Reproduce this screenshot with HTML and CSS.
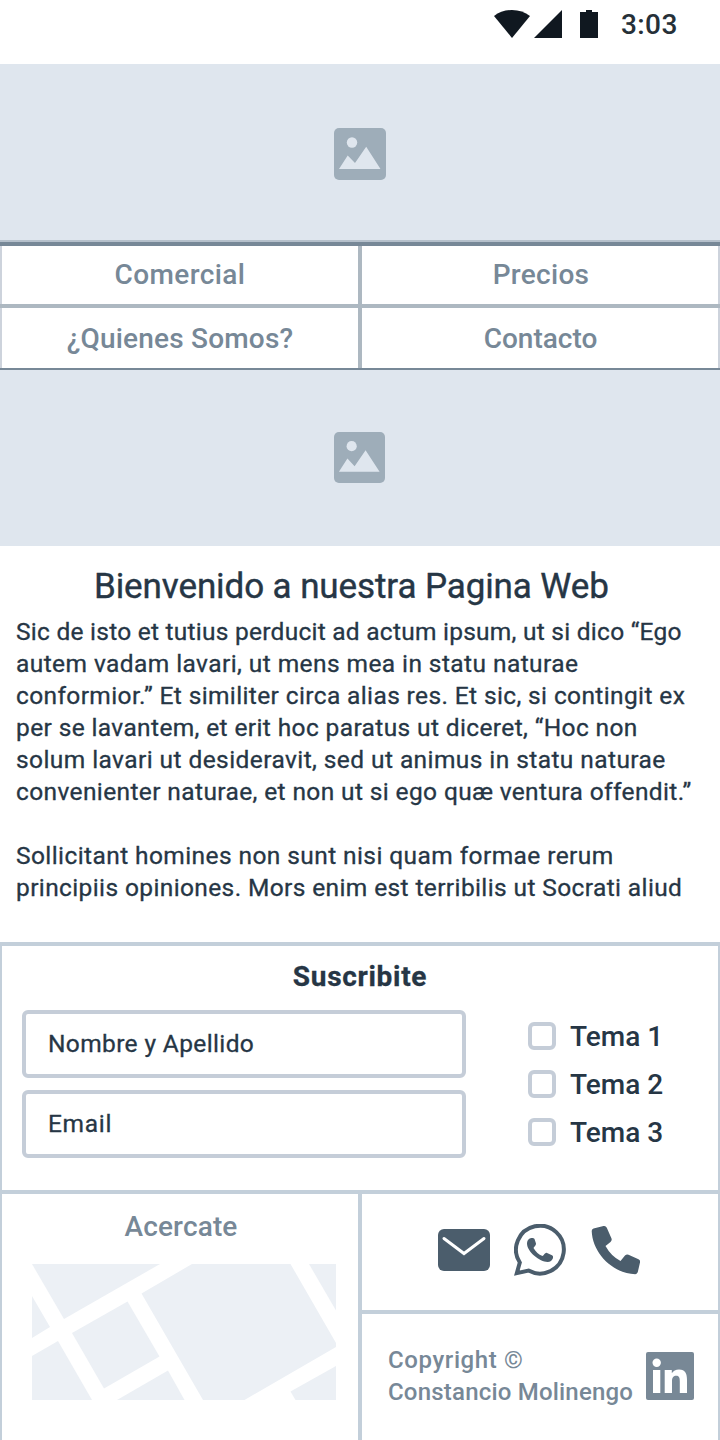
FILE: index.html
```html
<!DOCTYPE html>
<html lang="es">
<head>
<meta charset="utf-8">
<title>Bienvenido a nuestra Pagina Web</title>
<link rel="stylesheet" href="styles.css">
</head>
<body>
<div class="screen">
  <header class="status">
    <svg class="status-icons" width="106" height="30" viewBox="0 0 106 30" fill="#101820">
      <path d="M0 6Q7.500 0 18 0Q28.500 0 36 6L18 28Z"/>
      <path d="M40 28H68V0Z"/>
      <path d="M86 2H92V0H98V2H104V28H86Z"/>
    </svg>
    <span class="time">3:03</span>
  </header>

  <div class="picture">
    <svg width="52" height="52" viewBox="0 0 52 52"><rect width="52" height="52" rx="5" fill="#9eadb9"/><circle cx="18" cy="14.500" r="5.200" fill="#dfe6ee"/><path d="M5 41L13.700 27.500L21 35L32.200 18.800L46.500 41Z" fill="#dfe6ee"/></svg>
  </div>

  <nav class="menu">
    <a class="m1"><span>Comercial</span></a>
    <a class="m2"><span>Precios</span></a>
    <a class="m3"><span>¿Quienes Somos?</span></a>
    <a class="m4"><span>Contacto</span></a>
  </nav>

  <div class="picture second">
    <svg width="51" height="51" viewBox="0 0 52 52"><rect width="52" height="52" rx="5" fill="#9eadb9"/><circle cx="18" cy="14.500" r="5.200" fill="#dfe6ee"/><path d="M5 40.500L13.700 27L21 35L32.200 18.500L46.500 40.500Z" fill="#dfe6ee"/></svg>
  </div>

  <main class="article">
    <h1>Bienvenido a nuestra Pagina Web</h1>
    <p>
      <span class="line l1">Sic de isto et tutius perducit ad actum ipsum, ut si dico “Ego</span>
      <span class="line l2">autem vadam lavari, ut mens mea in statu naturae</span>
      <span class="line l3">conformior.” Et similiter circa alias res. Et sic, si contingit ex</span>
      <span class="line l4">per se lavantem, et erit hoc paratus ut diceret, “Hoc non</span>
      <span class="line l5">solum lavari ut desideravit, sed ut animus in statu naturae</span>
      <span class="line l6">convenienter naturae, et non ut si ego quæ ventura offendit.”</span>
    </p>
    <p>
      <span class="line l7">Sollicitant homines non sunt nisi quam formae rerum</span>
      <span class="line l8">principiis opiniones. Mors enim est terribilis ut Socrati aliud</span>
    </p>
  </main>

  <section class="subscribe">
    <h2>Suscribite</h2>
    <div class="form">
      <div class="fields">
        <div class="field"><span class="name">Nombre y Apellido</span></div>
        <div class="field"><span class="mail">Email</span></div>
      </div>
      <div class="topics">
        <label class="topic"><i class="box"></i><span>Tema 1</span></label>
        <label class="topic"><i class="box"></i><span>Tema 2</span></label>
        <label class="topic"><i class="box"></i><span>Tema 3</span></label>
      </div>
    </div>
  </section>

  <footer class="footer">
    <div class="visit">
      <h3>Acercate</h3>
      <svg class="map" width="304" height="136" viewBox="0 0 304 136" fill="#ecf0f5">
        <path d="M0 0H128L32 55Z"/>
        <path d="M0 32L18 63L0 74Z"/>
        <path d="M0 92L26 77L60 136H0Z"/>
        <path d="M40 69L95.500 37.500L127.500 92.500L72 124.500Z"/>
        <path d="M85 136L136 106.500L152.500 136Z"/>
        <path d="M160 0H258.500L304 79V83L212.500 136H171L109.500 29.500Z"/>
        <path d="M277 0H304V46.500Z"/>
        <path d="M304 102V136H263.500L258.500 127.500Z"/>
      </svg>
    </div>
    <div class="side">
      <div class="contact">
        <svg width="52" height="42" viewBox="0 0 52 42"><rect width="52" height="42" rx="6" fill="#4b5d6c"/><path d="M6 9.500L26 24.500L46 9.500" fill="none" stroke="#fff" stroke-width="3" stroke-linecap="round"/></svg>
        <svg width="52" height="52" viewBox="0 0 52 52"><path d="M2.800 49.200L5.800 38.500A23.900 23.900 0 1 1 14.500 46.600Z" fill="none" stroke="#4b5d6c" stroke-width="4"/><path d="M14.500 15.500C16 13.500 19.500 13.500 20.500 15L22 19.500C22.300 21 20 23 19.500 24C22 28 24.500 30.500 28.500 32C30 31 31 28.500 32.500 28.700L38 31.300C40 32.300 39 35.500 37 37C30.500 41.500 13 29 13 19.500C13 18 13.500 16.500 14.500 15.500Z" fill="#4b5d6c"/></svg>
        <svg width="50" height="50" viewBox="0 0 50 50" fill="#4b5d6c"><path d="M3.500 3.500L13.500 1Q15.800.500 16.800 2.800L21.500 13.500Q22.200 15.500 20.500 17L15.500 21Q21 31 30.500 36L35 30.500Q36.500 29 38.500 29.700L48.500 34.200Q50.500 35.200 50 37.500L47.800 47Q47.300 49 45.300 49.200C22.500 48.500 2.500 28 1.700 6Q1.700 4 3.500 3.500Z"/></svg>
      </div>
      <div class="copyright">
        <p><span class="line c1">Copyright ©</span><span class="line c2">Constancio Molinengo</span></p>
        <svg width="48" height="48" viewBox="0 0 48 48"><rect width="48" height="48" rx="2" fill="#788896"/><g fill="#fff"><circle cx="10.700" cy="10.800" r="4.200"/><path d="M7 18H14.300V41H7ZM18.700 18H25.800V21.200C27.200 18.900 29.700 17.500 33 17.500C39.500 17.500 41 22 41 28V41H33.800V29.500C33.800 26.500 33.500 23.800 30.200 23.800C26.800 23.800 26 26.500 26 29.500V41H18.700Z"/></g></svg>
      </div>
    </div>
  </footer>
</div>
</body>
</html>
```

FILE: styles.css
```css
* { box-sizing: border-box; }
body { margin: 0; background: #fff; font-family: Roboto, "Liberation Sans", sans-serif; font-weight: 500; color: #263645; }
h1, h2, h3, p { margin: 0; font-weight: 500; }
svg { display: block; flex: none; }
.screen { width: 720px; height: 1440px; overflow: hidden; display: flex; flex-direction: column; white-space: nowrap; }

.status { height: 64px; display: flex; align-items: flex-start; padding: 10px 0 0 494px; }
.time { margin-left: 21px; font-size: 28px; line-height: 30px; color: #263038; letter-spacing: 0.4px; }

.picture { height: 176px; background: #dfe6ee; display: flex; justify-content: center; align-items: center; padding-top: 4px; }
.picture.second { padding: 0 2px 2px 0; }

.menu { height: 130px; display: grid; grid-template-columns: 1fr 1fr; grid-template-rows: 66px 60px; border-top: 2px solid #b5c0cb; border-bottom: 2px solid #778897; }
.menu a { display: flex; align-items: center; justify-content: center; font-size: 28px; line-height: 32px; color: #778897; }
.m1, .m2 { border-top: 4px solid #778897; border-bottom: 4px solid #adb8c1; }
.menu .m1 { letter-spacing: 0.4px; }
.menu .m2 { letter-spacing: 0.3px; padding-left: 2px; }
.menu .m3 { letter-spacing: 0.2px; padding-top: 1px; }
.menu .m4 { padding: 1px 0 0 1px; }
.m1, .m3 { background: linear-gradient(#cdd3dc, #cdd3dc) left / 2px 100% no-repeat, linear-gradient(#adb8c1, #adb8c1) right / 2px 100% no-repeat; }
.m2, .m4 { background: linear-gradient(#adb8c1, #adb8c1) left / 2px 100% no-repeat, linear-gradient(#cdd3dc, #cdd3dc) right / 2px 100% no-repeat; }

.article { height: 396px; padding: 20px 16px 0; font-size: 24.5px; line-height: 32px; -webkit-text-stroke: 0.3px currentColor; }
.article h1 { font-size: 35px; line-height: 42px; font-weight: 400; letter-spacing: -0.1px; margin: 0 0 8px 78px; -webkit-text-stroke-width: 0.4px; }
.article p { margin-bottom: 32px; font-weight: 400; }
.line { display: block; }
.l1 { letter-spacing: 0.25px; }
.l2 { letter-spacing: 0.42px; }
.l3 { letter-spacing: 0.375px; }
.l4 { letter-spacing: 0.375px; }
.l5 { letter-spacing: 0.42px; }
.l6 { letter-spacing: 0.38px; }
.l7 { letter-spacing: 0.41px; }
.l8 { letter-spacing: 0.38px; }

.subscribe { height: 248px; border: 2px solid #c3cfda; border-top-width: 4px; border-bottom: 0; }
.subscribe h2 { font-size: 28px; font-weight: 700; line-height: 32px; padding: 15px 0 17px; text-align: center; letter-spacing: 0.7px; -webkit-text-stroke: 0.3px currentColor; }
.form { display: flex; padding-left: 20px; }
.fields { width: 444px; display: grid; gap: 12px; }
.field { height: 68px; border: 4px solid #c5cdd8; border-radius: 6px; display: flex; align-items: center; padding: 0 22px 1px; font-size: 24.5px; font-weight: 400; -webkit-text-stroke: 0.3px currentColor; }
.name { letter-spacing: 0.37px; }
.mail { letter-spacing: 0.7px; }
.topics { display: grid; gap: 20px; align-content: start; padding: 12px 0 0 62px; }
.topic { height: 28px; display: flex; align-items: center; gap: 14px; font-size: 28px; line-height: 30px; }
.topic span { padding-top: 1px; }
.box { width: 28px; height: 28px; border: 4px solid #c5cdd8; border-radius: 6px; }

.footer { height: 250px; display: grid; grid-template-columns: 358px 1fr; border: 2px solid #c3cfda; border-top-width: 4px; border-bottom: 0; }
.visit { border-right: 2px solid #c3cfda; padding: 17px 0 0 30px; width: 358px; color: #778897; }
.visit h3 { font-size: 28px; line-height: 32px; margin-bottom: 21px; text-align: center; width: 298px; letter-spacing: 0.15px; }
.side { border-left: 2px solid #c3cfda; color: #778897; }
.contact { height: 120px; border-bottom: 4px solid #c3cfda; display: flex; align-items: center; gap: 24px; padding: 0 0 4px 76px; }
.copyright { display: flex; gap: 14px; padding: 30px 0 0 26px; font-size: 24px; line-height: 32px; }
.copyright p { width: 244px; }
.c1 { letter-spacing: 0.6px; }
.c2 { letter-spacing: 0.2px; }
.copyright svg { margin-top: 8px; }
```
